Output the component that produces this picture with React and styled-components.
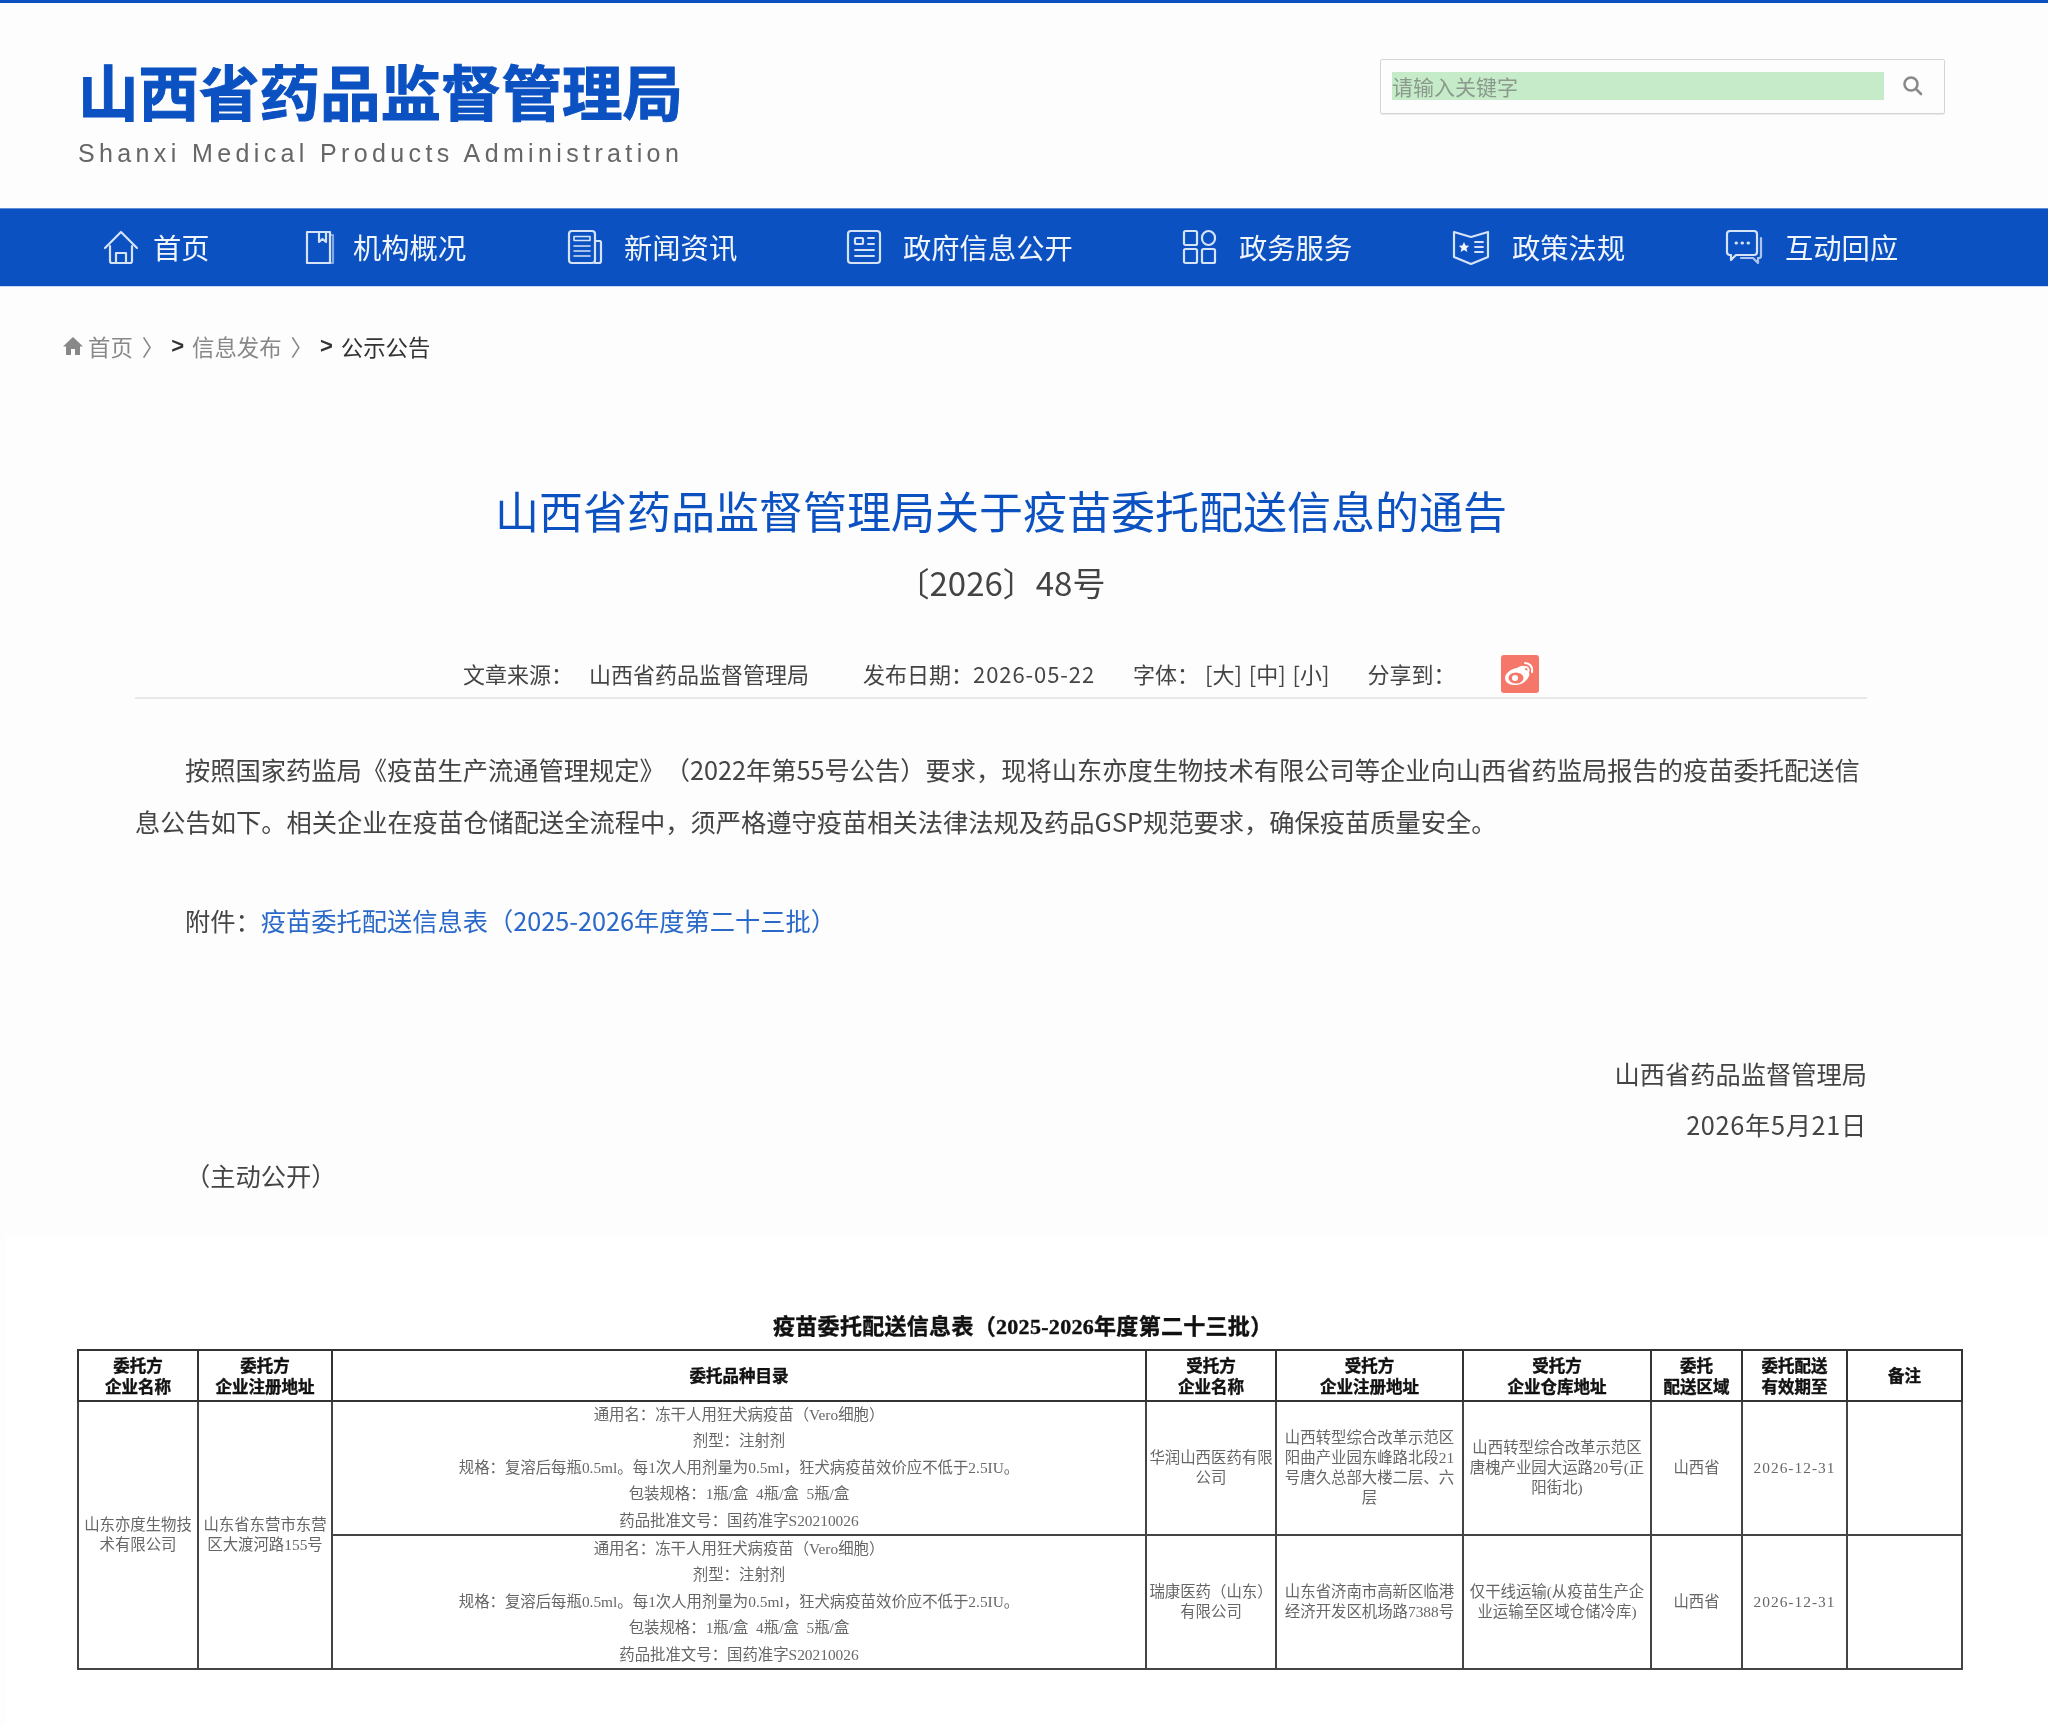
import React from "react";
import styled, { createGlobalStyle } from "styled-components";

const CJK = `"Noto Sans CJK SC", "Noto Sans", sans-serif`;
const SERIF = `"Liberation Serif", "Noto Sans CJK SC", serif`;

const GlobalStyle = createGlobalStyle`
  html, body { margin: 0; padding: 0; background: #fdfdfd; }
  body { font-family: ${CJK}; color: #333; text-spacing-trim: space-all; }
  * { box-sizing: border-box; }
`;

const Page = styled.div`
  width: 2048px;
  height: 1726px;
  overflow: hidden;
  display: flex;
  flex-direction: column;
  filter: blur(0.35px);
`;

const Header = styled.header`
  height: 208px;
  border-top: 3px solid #0b51c1;
  padding: 57px 103px 0 78px;
  display: flex;
  justify-content: space-between;
  align-items: flex-start;
`;

const Logo = styled.div`
  width: 606px;
`;

const LogoName = styled.div`
  font-size: 60.5px;
  line-height: 60px;
  font-weight: 700;
  color: #0b51c1;
  -webkit-text-stroke: 1px #0b51c1;
  white-space: nowrap;
`;

const LogoSub = styled.div`
  margin-top: 20px;
  font-family: "Liberation Sans", Arial, sans-serif;
  font-size: 25px;
  line-height: 26px;
  letter-spacing: 4.37px;
  color: #666;
  white-space: nowrap;
`;

const Search = styled.div`
  width: 565px;
  height: 55px;
  margin-top: -1px;
  padding: 12px 11px 0 11px;
  border: 1px solid #d4d4d4;
  border-radius: 2px;
  box-shadow: 0 1px 1px rgba(0, 0, 0, 0.08);
  display: flex;
  align-items: flex-start;
  justify-content: space-between;
`;

const SearchField = styled.div`
  width: 492px;
  height: 28px;
  background: #c5ebc8;
  font-size: 21px;
  line-height: 28px;
  color: #8b9a8d;
`;

const SearchButton = styled.span`
  margin: 3px 10px 0 0;
  display: flex;
  color: #8a8a8a;
`;

const Nav = styled.nav`
  height: 79px;
  background: #0b51c1;
  border-top: 1px solid #5f8ed8;
  border-bottom: 1px solid #c6d6f0;
  padding: 0 0 2px 103px;
  display: grid;
  grid-template-columns: 202px 262px 279px 336px 270px 273px 1fr;
  align-items: center;
`;

const NavItem = styled.a`
  display: flex;
  align-items: center;
  gap: ${(p) => p.$gap}px;
  font-size: 28.3px;
  line-height: 36px;
  color: #f1f5fc;
  white-space: nowrap;
`;

const NavIcon = styled.svg`
  flex: none;
  fill: none;
  stroke: #d6e2f6;
  stroke-width: 2.2;
  stroke-linejoin: round;
  stroke-linecap: round;
`;

const Crumbs = styled.div`
  height: 24px;
  margin-top: 47px;
  padding-left: 63px;
  display: flex;
  align-items: center;
  font-size: 22.4px;
  line-height: 24px;
  white-space: nowrap;
`;

const Crumb = styled.span`
  color: ${(p) => (p.$current ? "#333" : "#888")};
  margin-left: ${(p) => p.$ml || 0}px;
`;

const CrumbMark = styled.span`
  color: #333;
  font-family: "Liberation Sans", sans-serif;
  font-size: 22px;
  font-weight: 700;
  margin-left: ${(p) => p.$ml}px;
`;

const Article = styled.article`
  width: 1732px;
  margin: 0 0 0 135px;
`;

const Title = styled.h1`
  margin: 122px 0 0;
  font-size: 44px;
  line-height: 60px;
  font-weight: 400;
  color: #0b51c1;
  text-align: center;
  white-space: nowrap;
`;

const DocNumber = styled.div`
  margin-top: 20px;
  font-size: 33px;
  line-height: 44px;
  text-align: center;
  color: #444;
`;

const Meta = styled.div`
  height: 47px;
  margin-top: 45px;
  padding-left: 328px;
  display: flex;
  align-items: center;
  font-size: 22px;
  color: #444;
  white-space: nowrap;
`;

const MetaText = styled.span`
  margin-left: ${(p) => p.$ml || 0}px;
  letter-spacing: ${(p) => p.$track || 0}px;
  word-spacing: ${(p) => p.$words || 0}px;
`;

const ShareIcon = styled.span`
  width: 38px;
  height: 38px;
  margin: 2px 0 0 45px;
  border-radius: 3px;
  background: #f4776a;
  display: flex;
  align-items: center;
  justify-content: center;
`;

const Rule = styled.div`
  height: 2px;
  margin-top: 1px;
  background: #e8e8e8;
`;

const Paragraph = styled.p`
  margin: ${(p) => p.$mt}px 0 0;
  font-size: 25.25px;
  line-height: 51.5px;
  color: #444;
  text-indent: ${(p) => (p.$flat ? 0 : 50)}px;
  text-align: ${(p) => (p.$right ? "right" : "left")};
  letter-spacing: ${(p) => p.$track || 0}px;
`;

const AttachLink = styled.a`
  color: #2a69c8;
`;

const Attachment = styled.section`
  flex: 1;
  margin: 36px 0 0 5px;
  padding-top: 75px;
  background: #fff;
`;

const TableTitle = styled.div`
  height: 30px;
  padding-left: 768px;
  font-family: ${SERIF};
  font-size: 22px;
  line-height: 30px;
  font-weight: 700;
  letter-spacing: 0.3px;
  color: #111;
  white-space: nowrap;
  -webkit-text-stroke: 0.4px #111;
`;

const SheetWrap = styled.div`
  margin: 7px 0 0 72px;
  filter: blur(0.3px);
`;

const Sheet = styled.table`
  width: 1884px;
  table-layout: fixed;
  border-collapse: collapse;
  border: 2px solid #333;
  font-family: ${SERIF};
  text-align: center;
`;

const HeadCell = styled.th`
  height: 51px;
  padding: 2px 0 0;
  border: 2px solid #333;
  font-size: 16.5px;
  line-height: 21px;
  font-weight: 700;
  color: #111;
  -webkit-text-stroke: 0.4px #111;
`;

const Cell = styled.td`
  height: ${(p) => p.$h || 134}px;
  padding: 0 ${(p) => p.$pad || 2}px;
  border: 2px solid #444;
  font-size: 15.4px;
  line-height: 20px;
  color: #666;
  letter-spacing: ${(p) => p.$track || 0}px;
`;

const ProductLine = styled.div`
  height: 26.4px;
  line-height: 26.4px;
  font-size: 15.4px;
  color: #666;
  white-space: pre;
`;

const columns = [120, 134, 814, 130, 187, 188, 91, 105, 115];

const navItems = [
  {
    label: "首页",
    gap: 14,
    width: 36,
    icon: (
      <>
        <path d="M2 19 18 3l16 16" />
        <path d="M7 17v15a2 2 0 0 0 2 2h18a2 2 0 0 0 2-2V17" />
        <path d="M13 34V24h10v10" />
      </>
    ),
  },
  {
    label: "机构概况",
    gap: 18,
    width: 30,
    icon: (
      <>
        <rect x="2" y="3" width="23" height="31" />
        <path d="M25 6h3v28h-3" opacity="0.6" />
        <path d="M14 3v10l3.5-3 3.5 3V3" />
      </>
    ),
  },
  {
    label: "新闻资讯",
    gap: 21,
    width: 36,
    icon: (
      <>
        <rect x="2" y="2" width="26" height="32" rx="3" />
        <path d="M28 12h5a2 2 0 0 1 1 2v18a2 2 0 0 1-2 2h-4" />
        <path d="M7 7.5h16v4H7zM7 17h16M7 22h16M7 27h16" strokeWidth="1.6" />
      </>
    ),
  },
  {
    label: "政府信息公开",
    gap: 21,
    width: 36,
    icon: (
      <>
        <path d="M7 34H5a3 3 0 0 1-3-3V5a3 3 0 0 1 3-3h26a3 3 0 0 1 3 3v26a3 3 0 0 1-3 3H7" />
        <rect x="9" y="9" width="8" height="6" rx="1" />
        <path d="M22 9h6M22 15h6M9 21h19M9 27h19" strokeWidth="1.8" />
      </>
    ),
  },
  {
    label: "政务服务",
    gap: 22,
    width: 35,
    icon: (
      <>
        <rect x="2" y="2" width="13" height="14" rx="1.5" />
        <rect x="20" y="2" width="13" height="14" rx="6.5" />
        <rect x="2" y="20" width="13" height="14" rx="1.5" />
        <rect x="20" y="20" width="13" height="14" rx="1.5" />
      </>
    ),
  },
  {
    label: "政策法规",
    gap: 22,
    width: 38,
    icon: (
      <>
        <path d="M2 3 19 8l17-5v25l-17 7-17-7z" />
        <path d="M23 13h8M23 18h8M23 23h8" strokeWidth="1.8" />
        <path d="m12 13 1.6 3.4 3.6.4-2.7 2.5.8 3.7-3.3-1.9-3.3 1.9.8-3.7-2.7-2.5 3.6-.4z" fill="#f1f5fc" stroke="none" />
      </>
    ),
  },
  {
    label: "互动回应",
    gap: 22,
    width: 38,
    icon: (
      <>
        <path d="M5 2h24a3 3 0 0 1 3 3v18a3 3 0 0 1-3 3H11l-5 5v-5H5a3 3 0 0 1-3-3V5a3 3 0 0 1 3-3z" />
        <path d="M36 9v18a2 2 0 0 1-2 2h-1v5l-5-5H16" opacity="0.8" />
        <path d="M11 14h.5M17 14h.5M23 14h.5" strokeWidth="3" />
      </>
    ),
  },
];

const product = [
  "通用名：冻干人用狂犬病疫苗（Vero细胞）",
  "剂型：注射剂",
  "规格：复溶后每瓶0.5ml。每1次人用剂量为0.5ml，狂犬病疫苗效价应不低于2.5IU。",
  "包装规格：1瓶/盒  4瓶/盒  5瓶/盒",
  "药品批准文号：国药准字S20210026",
];

function Products() {
  return product.map((line) => <ProductLine key={line}>{line}</ProductLine>);
}

function App() {
  return (
    <Page>
      <GlobalStyle />
      <Header>
        <Logo>
          <LogoName>山西省药品监督管理局</LogoName>
          <LogoSub>Shanxi Medical Products Administration</LogoSub>
        </Logo>
        <Search>
          <SearchField>请输入关键字</SearchField>
          <SearchButton>
            <svg width="21" height="21" viewBox="0 0 21 21" fill="none" stroke="currentColor" strokeWidth="2.6" strokeLinecap="round">
              <circle cx="9" cy="9" r="6.5" />
              <path d="m14 14 5 5" />
            </svg>
          </SearchButton>
        </Search>
      </Header>

      <Nav>
        {navItems.map((item) => (
          <NavItem key={item.label} $gap={item.gap}>
            <NavIcon width={item.width} height="36" viewBox={`0 0 ${item.width} 36`}>
              {item.icon}
            </NavIcon>
            {item.label}
          </NavItem>
        ))}
      </Nav>

      <Crumbs>
        <svg width="20" height="20" viewBox="0 0 20 20" fill="#888">
          <path d="M10 1 0 10.5h3V19h5v-6h4v6h5v-8.500h3z" />
        </svg>
        <Crumb $ml={5}>首页</Crumb>
        <Crumb $ml={9}>〉</Crumb>
        <CrumbMark $ml={7}>&gt;</CrumbMark>
        <Crumb $ml={8}>信息发布</Crumb>
        <Crumb $ml={9}>〉</Crumb>
        <CrumbMark $ml={7}>&gt;</CrumbMark>
        <Crumb $current $ml={8}>公示公告</Crumb>
      </Crumbs>

      <Article>
        <Title>山西省药品监督管理局关于疫苗委托配送信息的通告</Title>
        <DocNumber>〔2026〕48号</DocNumber>
        <Meta>
          <MetaText>文章来源：</MetaText>
          <MetaText $ml={16}>山西省药品监督管理局</MetaText>
          <MetaText $ml={54}>发布日期：</MetaText>
          <MetaText $track={0.9}>2026-05-22</MetaText>
          <MetaText $ml={38}>字体：</MetaText>
          <MetaText $ml={6} $words={2}>[大] [中] [小]</MetaText>
          <MetaText $ml={38}>分享到：</MetaText>
          <ShareIcon>
            <svg width="30" height="26" viewBox="0 0 30 26">
              <path d="M12 7c6-4 9-2 8 2 4 0 5 3 4 6-2 6-9 9-15 9-5 0-9-3-9-7 0-4 5-9 12-10z" fill="#fff" />
              <ellipse cx="11" cy="17" rx="7.500" ry="5.500" fill="#f4776a" />
              <circle cx="10" cy="17" r="3" fill="#fff" />
              <path d="M20 2c4 0 8 3 7 9M20 6c2 0 4 1 3.500 4" fill="none" stroke="#fff" strokeWidth="2" strokeLinecap="round" />
            </svg>
          </ShareIcon>
        </Meta>
        <Rule />
        <Paragraph $mt={45}>
          按照国家药监局《疫苗生产流通管理规定》（2022年第55号公告）要求，现将山东亦度生物技术有限公司等企业向山西省药监局报告的疫苗委托配送信息公告如下。相关企业在疫苗仓储配送全流程中，须严格遵守疫苗相关法律法规及药品GSP规范要求，确保疫苗质量安全。
        </Paragraph>
        <Paragraph $mt={48}>
          附件：<AttachLink>疫苗委托配送信息表（2025-2026年度第二十三批）</AttachLink>
        </Paragraph>
        <Paragraph $mt={101} $flat $right>山西省药品监督管理局</Paragraph>
        <Paragraph $mt={0} $flat $right $track={0.7}>2026年5月21日</Paragraph>
        <Paragraph $mt={-1}>（主动公开）</Paragraph>
      </Article>

      <Attachment>
        <TableTitle>疫苗委托配送信息表（2025-2026年度第二十三批）</TableTitle>
        <SheetWrap>
          <Sheet>
            <colgroup>
              {columns.map((w, i) => <col key={i} style={{ width: w }} />)}
            </colgroup>
            <thead>
              <tr>
                <HeadCell>委托方<br />企业名称</HeadCell>
                <HeadCell>委托方<br />企业注册地址</HeadCell>
                <HeadCell>委托品种目录</HeadCell>
                <HeadCell>受托方<br />企业名称</HeadCell>
                <HeadCell>受托方<br />企业注册地址</HeadCell>
                <HeadCell>受托方<br />企业仓库地址</HeadCell>
                <HeadCell>委托<br />配送区域</HeadCell>
                <HeadCell>委托配送<br />有效期至</HeadCell>
                <HeadCell>备注</HeadCell>
              </tr>
            </thead>
            <tbody>
              <tr>
                <Cell $h={133} rowSpan={2}>山东亦度生物技术有限公司</Cell>
                <Cell $h={133} rowSpan={2}>山东省东营市东营区大渡河路155号</Cell>
                <Cell $h={133}><Products /></Cell>
                <Cell $h={133}>华润山西医药有限公司</Cell>
                <Cell $h={133} $pad={4}>山西转型综合改革示范区阳曲产业园东峰路北段21号唐久总部大楼二层、六层</Cell>
                <Cell $h={133} $pad={4}>山西转型综合改革示范区唐槐产业园大运路20号(正阳街北)</Cell>
                <Cell $h={133}>山西省</Cell>
                <Cell $h={133} $track={1}>2026-12-31</Cell>
                <Cell $h={133} />
              </tr>
              <tr>
                <Cell><Products /></Cell>
                <Cell>瑞康医药（山东）有限公司</Cell>
                <Cell $pad={4}>山东省济南市高新区临港经济开发区机场路7388号</Cell>
                <Cell $pad={4}>仅干线运输(从疫苗生产企业运输至区域仓储冷库)</Cell>
                <Cell>山西省</Cell>
                <Cell $track={1}>2026-12-31</Cell>
                <Cell />
              </tr>
            </tbody>
          </Sheet>
        </SheetWrap>
      </Attachment>
    </Page>
  );
}

export default App;
